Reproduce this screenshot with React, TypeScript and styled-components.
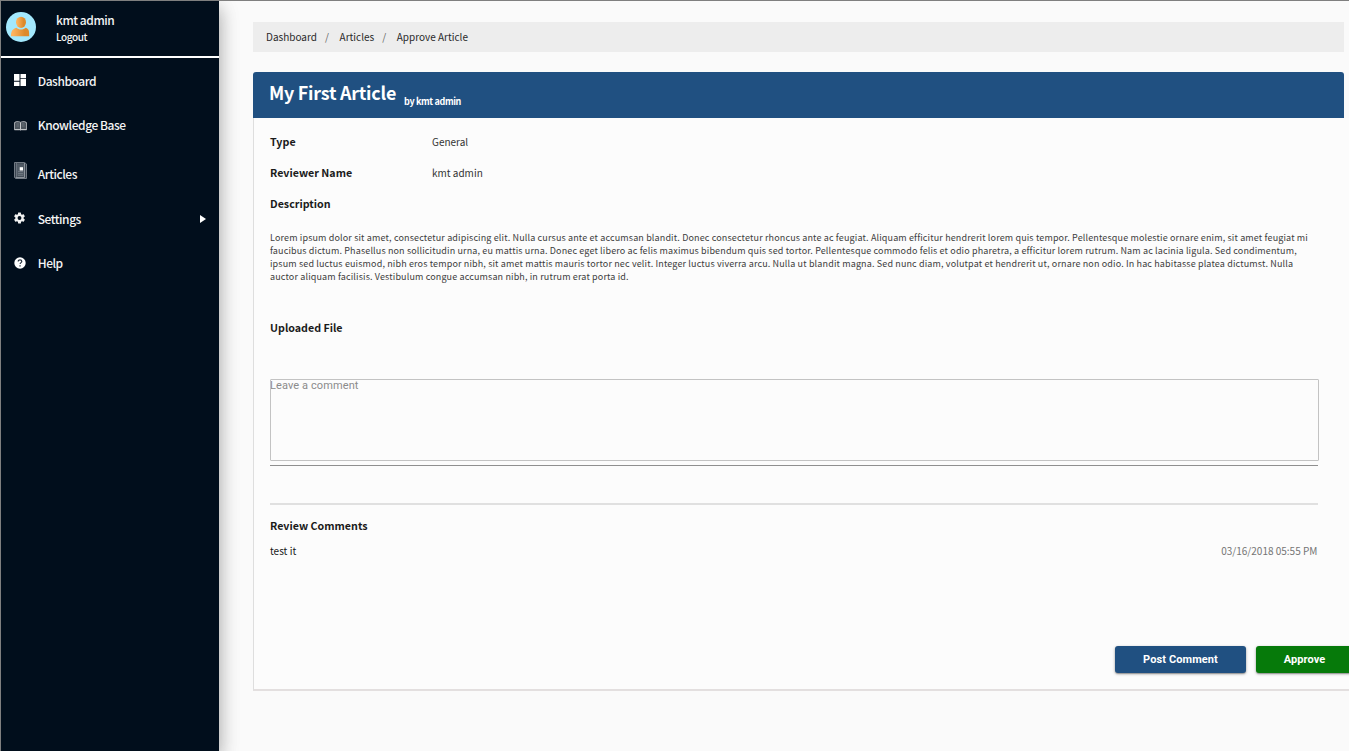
import React from "react";
import styled, { createGlobalStyle } from "styled-components";

const sans = `"Noto Sans CJK SC", "Noto Sans", sans-serif`;
const roboto = `Roboto, "Liberation Sans", sans-serif`;

const GlobalStyle = createGlobalStyle`
  *, *::before, *::after { box-sizing: border-box; }
  html, body { margin: 0; padding: 0; height: 100%; overflow: hidden; background: #fafafa; }
  h1, h2, p, ul, ol { margin: 0; padding: 0; list-style: none; }
  body { font-family: ${sans}; color: #1a1a1a; }
`;

const Shell = styled.div`
  display: flex;
  width: 100vw;
  height: 100vh;
  overflow: hidden;
  border-top: 1px solid #7f7f7f;
  border-left: 1px solid #7f7f7f;
`;

const Sidebar = styled.aside`
  position: relative;
  display: flex;
  flex-direction: column;
  flex: 0 0 218px;
  background: #010e1c;
  color: #f4f4f4;
  box-shadow: 0 8px 17px rgba(0, 0, 0, 0.2), 0 6px 20px rgba(0, 0, 0, 0.19);
`;

const Profile = styled.div`
  display: flex;
  height: 57px;
  padding: 11px 0 0 5px;
  border-bottom: 2px solid #fff;
`;

const ProfileText = styled.div`
  display: flex;
  flex-direction: column;
  margin-left: 20px;
`;

const UserName = styled.span`
  font-size: 12px;
  font-weight: 500;
  line-height: 16px;
  letter-spacing: -0.45px;
`;

const Logout = styled.a`
  margin-top: 1px;
  font-size: 10px;
  font-weight: 500;
  line-height: 16px;
  letter-spacing: -0.4px;
`;

const Nav = styled.ul`
  && { padding-top: 1px; }
`;

const NavItem = styled.li<{ $gap?: number }>`
  display: flex;
  align-items: center;
  height: 44px;
  margin-top: ${(p) => p.$gap ?? 0}px;
  padding: 0 13px;
`;

const NavIcon = styled.span<{ $lift?: number }>`
  display: flex;
  flex: 0 0 23.7px;
  margin-bottom: ${(p) => p.$lift ?? 0}px;
`;

const NavLabel = styled.span`
  flex: 1;
  font-size: 12px;
  font-weight: 500;
  line-height: 20px;
  letter-spacing: -0.45px;
`;

const Main = styled.main`
  flex: 1;
  min-width: 0;
  padding: 21px 0 0 34px;
`;

const Breadcrumb = styled.ol`
  display: flex;
  align-items: center;
  height: 30px;
  margin-right: 5px;
  background: #ededed;
  font-size: 10px;
  line-height: 20px;
  color: #2a2a2a;

  && { padding-left: 13px; }
`;

const Crumb = styled.li`
  & + &::before {
    content: "/";
    display: inline-block;
    width: 14.6px;
    margin-left: 8px;
    color: #666;
  }
`;

const Card = styled.section`
  margin-top: 20px;
`;

const CardHeader = styled.header`
  display: flex;
  align-items: baseline;
  height: 46px;
  margin-right: 5px;
  padding: 8px 16px 0;
  border-radius: 3px 3px 0 0;
  background: #205081;
  color: #fff;
`;

const Title = styled.h1`
  font-size: 17.9px;
  font-weight: 700;
  line-height: 24px;
  letter-spacing: -0.24px;
`;

const Author = styled.span`
  margin-left: 8px;
  font-size: 9px;
  font-weight: 700;
  line-height: 14px;
  letter-spacing: -0.35px;
  transform: translateY(5px);
`;

const CardBody = styled.div`
  display: flex;
  flex-direction: column;
  height: 573px;
  padding: 8px 31px 16px 16px;
  border-left: 1px solid #dedede;
  border-bottom: 2px solid #e3dfdf;
  background: #fcfcfc;
`;

const Field = styled.div`
  display: flex;
  align-items: center;
  height: 31px;
`;

const Label = styled.h2<{ $top?: number }>`
  width: 162px;
  font-size: 10.7px;
  font-weight: 700;
  line-height: 16px;

  && { margin-top: ${(p) => p.$top ?? 0}px; }
`;

const Value = styled.span`
  font-size: 10px;
  line-height: 16px;
  color: #333;
`;

const Description = styled.p`
  font-size: 9px;
  line-height: 13px;
  letter-spacing: 0.142px;
  white-space: pre;
  color: #3d3d3d;

  && { margin-top: 12px; }
`;

const CommentField = styled.div`
  height: 87px;
  margin-top: 43px;
  border-bottom: 1px solid #8f8f8f;
`;

const CommentBox = styled.textarea`
  display: block;
  width: calc(100% + 1px);
  height: 82px;
  padding: 0;
  border: 1px solid #c3c3c3;
  border-radius: 1px;
  outline: none;
  resize: none;
  background: transparent;
  font: 400 11px/12px ${roboto};
  letter-spacing: 0.1px;
  text-indent: -1px;

  &::placeholder { color: #8b8b8b; opacity: 1; }
`;

const Divider = styled.div`
  height: 2px;
  margin-top: 37px;
  flex-shrink: 0;
  background: #e0e0e0;
`;

const Comment = styled.div`
  display: flex;
  justify-content: space-between;
  margin-top: 8px;
  font-size: 10px;
  line-height: 17px;
`;

const Time = styled.time`
  padding-right: 0.6px;
  color: #757575;
`;

const Actions = styled.div`
  display: flex;
  gap: 10px;
  margin: auto -60px 0 845px;
`;

const Button = styled.button<{ $color: string; $width: number }>`
  flex: 0 0 ${(p) => p.$width}px;
  height: 27px;
  padding: 0;
  border: 0;
  border-radius: 3px;
  background: ${(p) => p.$color};
  box-shadow: 0 1px 3px rgba(0, 0, 0, 0.35), 0 1px 1px rgba(0, 0, 0, 0.2);
  color: #fff;
  font: 700 11px/27px ${roboto};
  letter-spacing: 0.1px;
`;

const Avatar = () => (
  <svg width="30" height="30" viewBox="0 0 30 30">
    <defs>
      <linearGradient id="skin" x1="0" x2="1">
        <stop offset="0.1" stopColor="#fdb35e" />
        <stop offset="0.75" stopColor="#dd8a2c" />
      </linearGradient>
    </defs>
    <circle cx="15" cy="15" r="15" fill="#a3e8fd" />
    <path d="M5 24.3c0-5 1.4-7.3 5.3-8.5 1.4 1.2 2.9 1.8 4.7 1.8s3.3-.6 4.7-1.8c3.6 1.2 3.5 3.5 3.5 8.5z" fill="url(#skin)" />
    <ellipse cx="15" cy="10.3" rx="5" ry="5.6" fill="url(#skin)" />
  </svg>
);

const DashboardIcon = () => (
  <svg width="12" height="12" viewBox="0 0 12 12" fill="#fff">
    <path d="M0 0h5.500v6.700H0zM0 7.700h5.500V12H0zM6.500 0H12v4.200H6.500zM6.500 5.100H12V12H6.500z" />
  </svg>
);

const BookIcon = () => (
  <svg width="13" height="10" viewBox="0 0 13 10">
    <path d="M.5 1.500h1V.8c2-.4 3.500-.3 5 .5 1.500-.8 3-.9 5-.5v.7h1v7.200H7.400l-.9.500-.9-.5H.5z" fill="#4c545d" stroke="#a9adb2" strokeWidth="0.9" />
    <path d="M6.500 1.500v7" stroke="#d7d9db" strokeWidth="0.9" />
    <path d="M2.500 3h2.600M2.500 5h2.600M7.900 3h2.600M7.900 5h2.600" stroke="#777e86" strokeWidth="0.7" />
    <path d="M.5 8.600h12" stroke="#c6c9cc" />
  </svg>
);

const ArticleIcon = () => (
  <svg width="13" height="17" viewBox="0 0 13 17">
    <path d="M.5.500h10l2 1.500v14.500h-11l-1-1z" fill="#38424e" stroke="#727a84" />
    <path d="M10.500 1v14.500h-9" fill="none" stroke="#a2a8ae" strokeWidth="0.8" />
    <path d="M2.500 1.500h7.500v13H2.500z" fill="#505a65" />
    <path d="M2.500 1v14" stroke="#7b838c" strokeWidth="0.7" />
    <path d="M4 9.500h5M4 11.500h5M4 13.300h5" stroke="#7b838c" strokeWidth="0.7" />
    <path d="M5.700 5.200h3.300v3.300H5.700z" fill="#fff" />
  </svg>
);

const GearIcon = () => (
  <svg width="11" height="12" viewBox="2 1.5 20 21" fill="#f2f2f2">
    <path d="M19.430 12.980c.04-.32.07-.64.07-.98s-.03-.66-.07-.98l2.110-1.650c.19-.15.24-.42.12-.64l-2-3.460c-.12-.22-.39-.3-.61-.22l-2.490 1c-.52-.4-1.080-.73-1.690-.98l-.38-2.650A.488.488 0 0 0 14 2h-4c-.25 0-.46.18-.49.42l-.38 2.650c-.61.25-1.170.59-1.690.98l-2.490-1c-.23-.09-.49 0-.61.22l-2 3.460c-.13.22-.07.49.12.64l2.110 1.650c-.04.32-.07.65-.07.98s.03.66.07.98l-2.110 1.650c-.19.15-.24.42-.12.64l2 3.460c.12.22.39.3.61.22l2.490-1c.52.4 1.080.73 1.690.98l.38 2.650c.03.24.24.42.49.42h4c.25 0 .46-.18.49-.42l.38-2.650c.61-.25 1.170-.59 1.690-.98l2.490 1c.23.09.49 0 .61-.22l2-3.460c.12-.22.07-.49-.12-.64zM12 15.500a3.500 3.500 0 1 1 0-7 3.500 3.500 0 0 1 0 7z" />
  </svg>
);

const HelpIcon = () => (
  <svg width="12" height="12" viewBox="0 0 12 12">
    <circle cx="6" cy="6" r="5.7" fill="#fff" />
    <path d="M4.200 4.600C4.200 3.400 5 2.800 6 2.800s1.800.7 1.800 1.600C7.800 5.500 6.200 5.700 6.100 7" fill="none" stroke="#26313d" strokeWidth="1.2" />
    <path d="M5.400 8.200h1.300v1.200H5.400z" fill="#26313d" />
  </svg>
);

const Caret = () => (
  <svg width="6" height="8" viewBox="0 0 6 8">
    <path d="M0 0l6 4-6 4z" fill="#fff" />
  </svg>
);

const nav = [
  { label: "Dashboard", icon: <DashboardIcon />, lift: 2 },
  { label: "Knowledge Base", icon: <BookIcon />, lift: -2 },
  { label: "Articles", icon: <ArticleIcon />, lift: 7, gap: 5 },
  { label: "Settings", icon: <GearIcon />, lift: 2, gap: 1, expandable: true },
  { label: "Help", icon: <HelpIcon />, lift: 0 },
];

const description = [
  "Lorem ipsum dolor sit amet, consectetur adipiscing elit. Nulla cursus ante et accumsan blandit. Donec consectetur rhoncus ante ac feugiat. Aliquam efficitur hendrerit lorem quis tempor. Pellentesque molestie ornare enim, sit amet feugiat mi",
  "faucibus dictum. Phasellus non sollicitudin urna, eu mattis urna. Donec eget libero ac felis maximus bibendum quis sed tortor. Pellentesque commodo felis et odio pharetra, a efficitur lorem rutrum. Nam ac lacinia ligula. Sed condimentum,",
  "ipsum sed luctus euismod, nibh eros tempor nibh, sit amet mattis mauris tortor nec velit. Integer luctus viverra arcu. Nulla ut blandit magna. Sed nunc diam, volutpat et hendrerit ut, ornare non odio. In hac habitasse platea dictumst. Nulla",
  "auctor aliquam facilisis. Vestibulum congue accumsan nibh, in rutrum erat porta id.",
].join("\n");

export default function App() {
  return (
    <Shell>
      <GlobalStyle />
      <Sidebar>
        <Profile>
          <Avatar />
          <ProfileText>
            <UserName>kmt admin</UserName>
            <Logout>Logout</Logout>
          </ProfileText>
        </Profile>
        <Nav>
          {nav.map((item) => (
            <NavItem key={item.label} $gap={item.gap}>
              <NavIcon $lift={item.lift}>{item.icon}</NavIcon>
              <NavLabel>{item.label}</NavLabel>
              {item.expandable && <Caret />}
            </NavItem>
          ))}
        </Nav>
      </Sidebar>
      <Main>
        <Breadcrumb>
          <Crumb>Dashboard</Crumb>
          <Crumb>Articles</Crumb>
          <Crumb>Approve Article</Crumb>
        </Breadcrumb>
        <Card>
          <CardHeader>
            <Title>My First Article</Title>
            <Author>by kmt admin</Author>
          </CardHeader>
          <CardBody>
            <Field>
              <Label>Type</Label>
              <Value>General</Value>
            </Field>
            <Field>
              <Label>Reviewer Name</Label>
              <Value>kmt admin</Value>
            </Field>
            <Field>
              <Label>Description</Label>
            </Field>
            <Description>{description}</Description>
            <Label $top={37}>Uploaded File</Label>
            <CommentField>
              <CommentBox placeholder="Leave a comment" />
            </CommentField>
            <Divider />
            <Label $top={13}>Review Comments</Label>
            <Comment>
              <span>test it</span>
              <Time>03/16/2018 05:55 PM</Time>
            </Comment>
            <Actions>
              <Button $color="#205081" $width={131}>Post Comment</Button>
              <Button $color="#067a0a" $width={97}>Approve</Button>
            </Actions>
          </CardBody>
        </Card>
      </Main>
    </Shell>
  );
}
